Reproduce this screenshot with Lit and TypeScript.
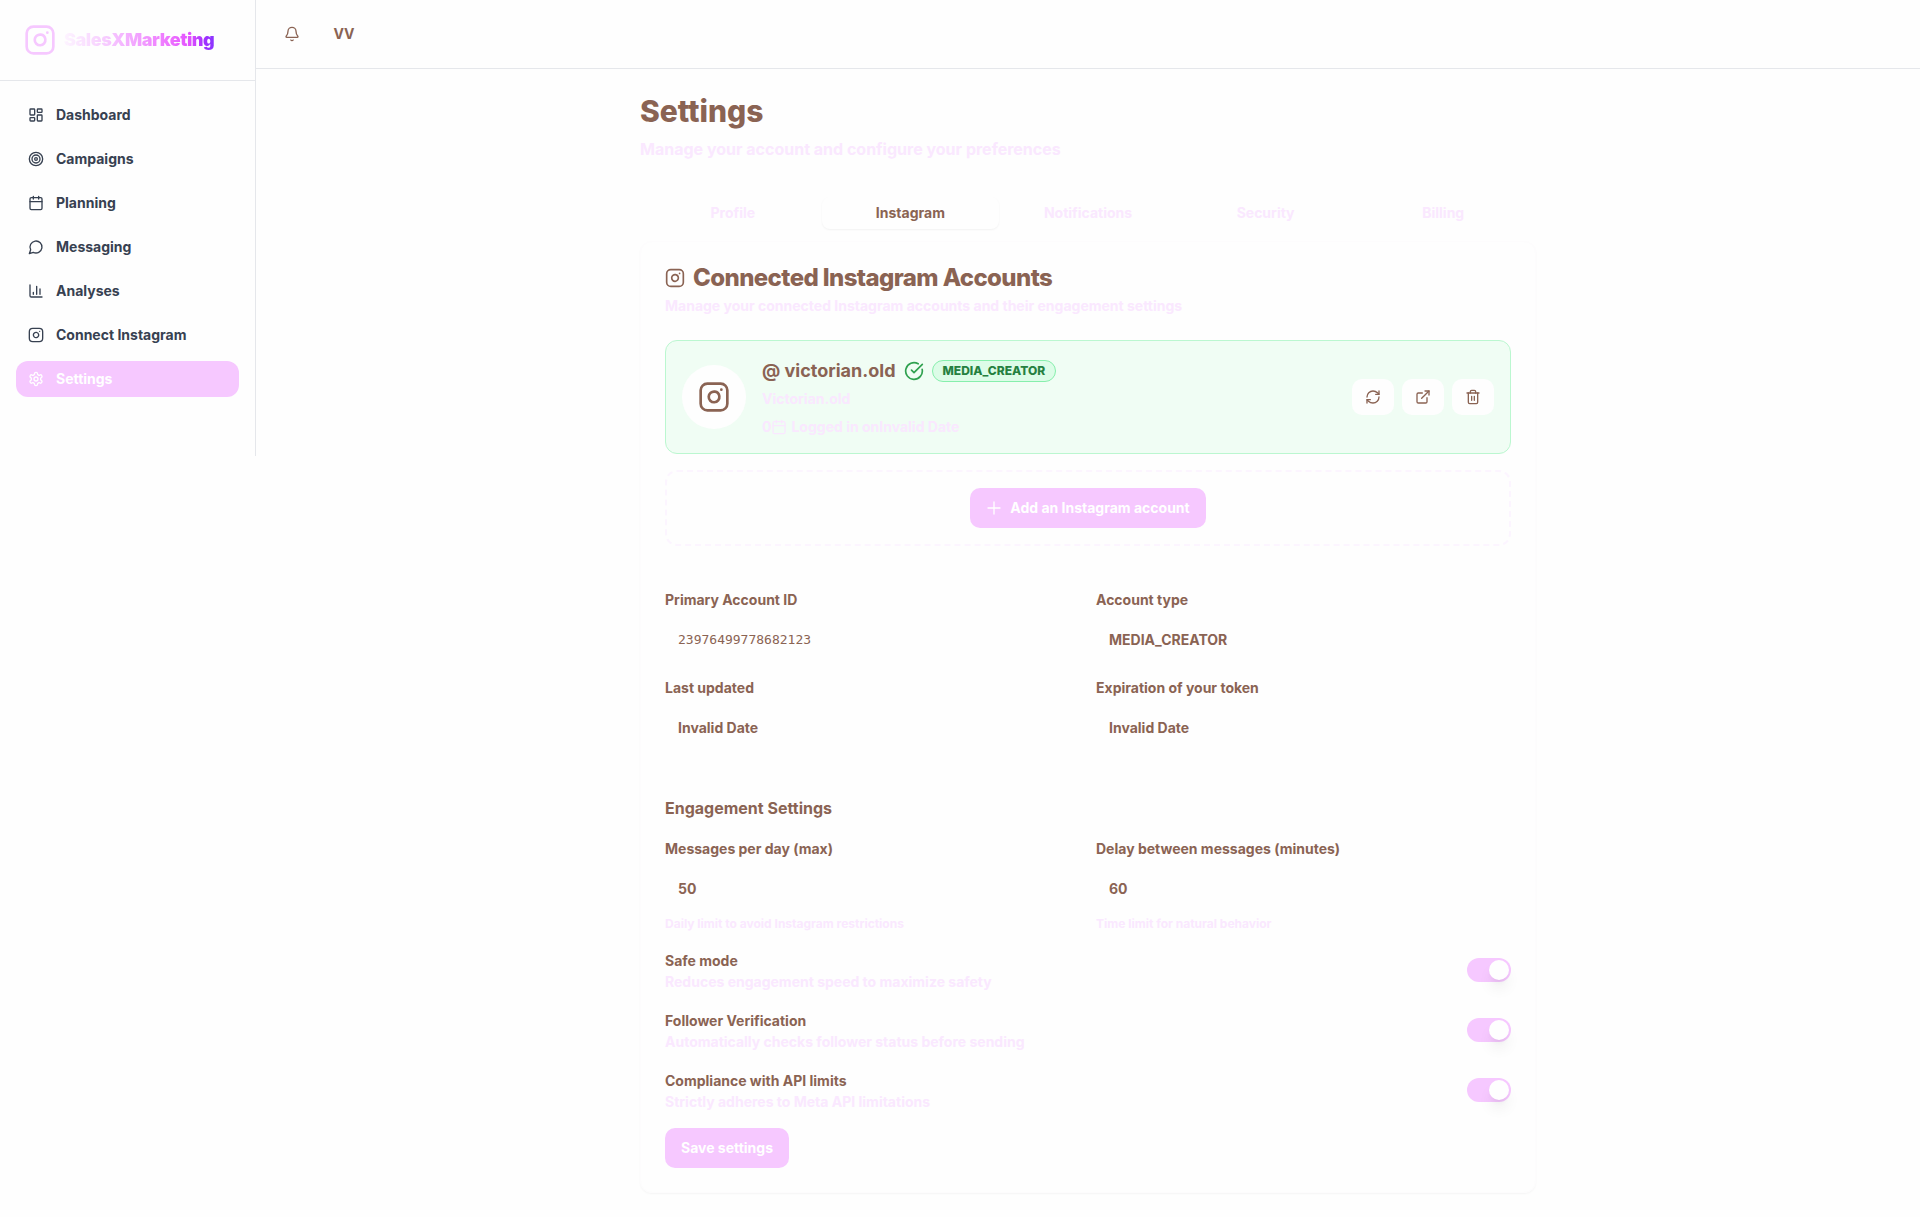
import { LitElement, html, css, svg, nothing, type TemplateResult } from "lit";
import { customElement, property, state } from "lit/decorators.js";
import { classMap } from "lit/directives/class-map.js";

const glyphs: Record<string, TemplateResult> = {
  instagram: svg`<rect width="20" height="20" x="2" y="2" rx="5"/><path d="M16 11.37A4 4 0 1 1 12.63 8 4 4 0 0 1 16 11.37z"/><path d="M17.5 6.5h.01"/>`,
  dashboard: svg`<rect width="7" height="9" x="3" y="3" rx="1"/><rect width="7" height="5" x="14" y="3" rx="1"/><rect width="7" height="9" x="14" y="12" rx="1"/><rect width="7" height="5" x="3" y="16" rx="1"/>`,
  target: svg`<circle cx="12" cy="12" r="10"/><circle cx="12" cy="12" r="6"/><circle cx="12" cy="12" r="2"/>`,
  calendar: svg`<path d="M8 2v4M16 2v4"/><rect width="18" height="18" x="3" y="4" rx="2"/><path d="M3 10h18"/>`,
  message: svg`<path d="M7.9 20A9 9 0 1 0 4 16.1L2 22Z"/>`,
  chart: svg`<path d="M3 3v16a2 2 0 0 0 2 2h16"/><path d="M18 17V9M13 17V5M8 17v-3"/>`,
  settings: svg`<path d="M12.22 2h-.44a2 2 0 0 0-2 2v.18a2 2 0 0 1-1 1.73l-.43.25a2 2 0 0 1-2 0l-.15-.08a2 2 0 0 0-2.73.73l-.22.38a2 2 0 0 0 .73 2.73l.15.1a2 2 0 0 1 1 1.72v.51a2 2 0 0 1-1 1.74l-.15.09a2 2 0 0 0-.73 2.73l.22.38a2 2 0 0 0 2.73.73l.15-.08a2 2 0 0 1 2 0l.43.25a2 2 0 0 1 1 1.73V20a2 2 0 0 0 2 2h.44a2 2 0 0 0 2-2v-.18a2 2 0 0 1 1-1.73l.43-.25a2 2 0 0 1 2 0l.15.08a2 2 0 0 0 2.73-.73l.22-.39a2 2 0 0 0-.73-2.73l-.15-.08a2 2 0 0 1-1-1.74v-.5a2 2 0 0 1 1-1.74l.15-.09a2 2 0 0 0 .73-2.73l-.22-.38a2 2 0 0 0-2.73-.73l-.15.08a2 2 0 0 1-2 0l-.43-.25a2 2 0 0 1-1-1.73V4a2 2 0 0 0-2-2z"/><circle cx="12" cy="12" r="3"/>`,
  bell: svg`<path d="M10.268 21a2 2 0 0 0 3.464 0"/><path d="M3.262 15.326A1 1 0 0 0 4 17h16a1 1 0 0 0 .74-1.673C19.41 13.956 18 12.499 18 8A6 6 0 0 0 6 8c0 4.499-1.411 5.956-2.738 7.326"/>`,
  check: svg`<path d="M21.801 10A10 10 0 1 1 17 3.335"/><path d="m9 11 3 3L22 4"/>`,
  refresh: svg`<path d="M3 12a9 9 0 0 1 9-9 9.75 9.75 0 0 1 6.74 2.74L21 8"/><path d="M21 3v5h-5"/><path d="M21 12a9 9 0 0 1-9 9 9.75 9.75 0 0 1-6.74-2.74L3 16"/><path d="M8 16H3v5"/>`,
  external: svg`<path d="M15 3h6v6"/><path d="M10 14 21 3"/><path d="M18 13v6a2 2 0 0 1-2 2H5a2 2 0 0 1-2-2V8a2 2 0 0 1 2-2h6"/>`,
  trash: svg`<path d="M3 6h18"/><path d="M19 6v14c0 1-1 2-2 2H7c-1 0-2-1-2-2V6"/><path d="M8 6V4c0-1 1-2 2-2h4c1 0 2 1 2 2v2"/><path d="M10 11v6M14 11v6"/>`,
  plus: svg`<path d="M3 12h18M12 3v18"/>`,
};

@customElement("ui-icon")
class UiIcon extends LitElement {
  @property() name = "";
  @property({ type: Number }) size = 16;
  static styles = css`
    :host { display: inline-flex; flex: none; }
    .glyph { display: block; fill: none; stroke: currentColor; stroke-width: 2; stroke-linecap: round; stroke-linejoin: round; }
  `;
  render() {
    return html`<svg class="glyph" width=${this.size} height=${this.size} viewBox="0 0 24 24" aria-hidden="true">${glyphs[this.name] ?? nothing}</svg>`;
  }
}

@customElement("app-sidebar")
class AppSidebar extends LitElement {
  static styles = css`
    :host { display: block; }
    .side { box-sizing: border-box; height: 100%; border-right: 1px solid #e5e7eb; }
    .brand { display: flex; align-items: center; gap: 8px; padding: 24px; border-bottom: 1px solid #e5e7eb; color: #f6c8ff; }
    .brand-name {
      font-size: 18px; line-height: 28px; font-weight: 900; letter-spacing: -0.025em;
      background: linear-gradient(90deg, #fdf4ff 0%, #fae0ff 15%, #f6c8ff 30%, #f2a0ff 50%, #ee74ff 70%, #e250ff 84%, #a030ff 94%, #8b36ff 100%);
      -webkit-background-clip: text; background-clip: text; color: transparent;
    }
    .nav { display: flex; flex-direction: column; gap: 8px; padding: 16px 16px 59px; }
    .item { display: flex; align-items: center; gap: 12px; padding: 8px 12px; border-radius: 12px; font-size: 14px; line-height: 20px; color: #374151; text-decoration: none; }
    .item.active { background: #f6c8ff; color: #ffffff; }
  `;
  private items = [
    ["dashboard", "Dashboard"],
    ["target", "Campaigns"],
    ["calendar", "Planning"],
    ["message", "Messaging"],
    ["chart", "Analyses"],
    ["instagram", "Connect Instagram"],
    ["settings", "Settings"],
  ];
  render() {
    return html`<aside class="side">
      <div class="brand"><ui-icon name="instagram" size="32"></ui-icon><span class="brand-name">SalesXMarketing</span></div>
      <nav class="nav">
        ${this.items.map(([icon, label]) => html`<a href="#" class=${classMap({ item: true, active: label === "Settings" })}><ui-icon name=${icon}></ui-icon>${label}</a>`)}
      </nav>
    </aside>`;
  }
}

@customElement("app-root")
class AppRoot extends LitElement {
  @state() private tab = "Instagram";
  static styles = css`
    :host { display: block; min-height: 100vh; background: #fefefe; color: #8a6353; font-family: Inter, "Liberation Sans", sans-serif; font-size: 14px; line-height: 20px; font-weight: 700; }
    button, input { font: inherit; color: inherit; margin: 0; }
    button { border: 0; background: none; padding: 0; cursor: pointer; }
    h1, h2, h3, p { margin: 0; }
    .shell { display: grid; grid-template-columns: 256px minmax(0, 1fr); align-items: start; }
    .topbar { display: flex; align-items: center; gap: 12px; padding: 14px 16px; border-bottom: 1px solid #e5e7eb; }
    .top-btn { display: flex; align-items: center; justify-content: center; width: 40px; height: 40px; }
    .page { max-width: 896px; margin: 0 auto; padding: 24px; }
    .title { font-size: 30px; line-height: 36px; font-weight: 800; }
    .subtitle { margin-top: 8px; font-size: 16px; line-height: 24px; color: #fae8ff; }
    .tabs { display: grid; grid-template-columns: repeat(5, minmax(0, 1fr)); margin-top: 32px; padding: 4px; }
    .tab { padding: 6px 12px; border-radius: 8px; color: #fae8ff; text-align: center; }
    .tab.active { background: #fefefe; color: #8a6353; box-shadow: 0 1px 2px rgba(0, 0, 0, 0.05); }
    .card { margin-top: 8px; padding: 24px; border: 1px solid #fdfcfd; border-radius: 12px; box-shadow: 0 1px 2px rgba(0, 0, 0, 0.04); }
    .card-title { display: flex; align-items: center; gap: 8px; font-size: 24px; line-height: 24px; font-weight: 800; letter-spacing: -0.025em; }
    .muted { color: #fae8ff; }
    .card-desc { margin-top: 6px; }
    .account { display: flex; align-items: center; gap: 16px; margin-top: 24px; padding: 16px; border: 1px solid #bbf7d0; border-radius: 12px; background: #f0fdf4; }
    .avatar { display: flex; align-items: center; justify-content: center; flex: none; width: 64px; height: 64px; border-radius: 50%; background: #fefefe; }
    .info { flex: 1; min-width: 0; }
    .name-row { display: flex; align-items: center; gap: 8px; }
    .name { font-size: 18px; line-height: 28px; font-weight: 700; }
    .ok { color: #2fa14f; }
    .badge { padding: 2px 10px; border: 1px solid #86efac; border-radius: 999px; background: #dcfce7; color: #25803f; font-size: 12px; line-height: 16px; font-weight: 800; }
    .full-name { margin-top: 4px; }
    .login { display: flex; align-items: center; margin-top: 8px; }
    .login-text { margin-left: 4px; }
    .actions { display: flex; gap: 8px; }
    .icon-btn { display: flex; padding: 10px 13px; border-radius: 10px; background: #fefefe; }
    .add-box { display: flex; justify-content: center; margin-top: 16px; padding: 16px; border: 2px dashed #fcf5ff; border-radius: 12px; }
    .primary { display: inline-flex; align-items: center; gap: 8px; padding: 10px 16px; border-radius: 10px; background: #f6c8ff; color: #ffffff; }
    .fields { display: grid; grid-template-columns: repeat(2, minmax(0, 1fr)); gap: 16px; }
    .details { margin-top: 41px; }
    .field { display: flex; flex-direction: column; gap: 6px; }
    .label { line-height: 26px; }
    .input { box-sizing: border-box; width: 100%; height: 40px; padding: 0 12px; border: 1px solid transparent; border-radius: 10px; background: transparent; outline: none; appearance: textfield; }
    .input.mono { font-family: "DejaVu Sans Mono", monospace; font-size: 13px; font-weight: 400; }
    .hint { margin-top: 2px; font-size: 12px; line-height: 16px; }
    .section { font-size: 16px; line-height: 24px; font-weight: 700; margin: 49px 0 16px; }
    .rows { display: flex; flex-direction: column; gap: 16px; margin: 16px 0; }
    .row { display: flex; align-items: center; justify-content: space-between; }
    .row-text { padding-bottom: 2px; }
    .row .label { display: block; }
    .row .muted { line-height: 16px; }
    .switch { appearance: none; display: flex; align-items: center; box-sizing: border-box; width: 44px; height: 24px; padding: 2px; border-radius: 12px; background: #e5e7eb; cursor: pointer; }
    .switch::before { content: ""; width: 20px; height: 20px; border-radius: 50%; background: #fefefe; box-shadow: 0 10px 15px -3px rgba(0, 0, 0, 0.1), 0 4px 6px -4px rgba(0, 0, 0, 0.1); }
    .switch:checked { justify-content: flex-end; background: #f6c8ff; }
  `;
  private field(id: string, label: string, value: string, hint = "", mono = false) {
    return html`<div class="field">
      <label class="label" for=${id}>${label}</label>
      <input class=${classMap({ input: true, mono })} id=${id} .value=${value} ?readonly=${!hint} />
      ${hint ? html`<p class="hint muted">${hint}</p>` : nothing}
    </div>`;
  }
  private toggle(id: string, label: string, text: string) {
    return html`<div class="row">
      <div class="row-text"><label class="label" for=${id}>${label}</label><p class="muted">${text}</p></div>
      <input class="switch" type="checkbox" role="switch" id=${id} checked />
    </div>`;
  }
  render() {
    return html`<div class="shell">
      <app-sidebar></app-sidebar>
      <div>
        <header class="topbar">
          <button class="top-btn" aria-label="Notifications"><ui-icon name="bell"></ui-icon></button>
          <button class="top-btn">VV</button>
        </header>
        <main class="page">
          <h1 class="title">Settings</h1>
          <p class="subtitle">Manage your account and configure your preferences</p>
          <div class="tabs" role="tablist">
            ${["Profile", "Instagram", "Notifications", "Security", "Billing"].map((t) => html`<button role="tab" aria-selected=${t === this.tab} class=${classMap({ tab: true, active: t === this.tab })} @click=${() => (this.tab = t)}>${t}</button>`)}
          </div>
          <section class="card">
            <h2 class="card-title"><ui-icon name="instagram" size="20"></ui-icon>Connected Instagram Accounts</h2>
            <p class="card-desc muted">Manage your connected Instagram accounts and their engagement settings</p>
            <div class="account">
              <div class="avatar"><ui-icon name="instagram" size="32"></ui-icon></div>
              <div class="info">
                <div class="name-row"><h3 class="name">@ victorian.old</h3><ui-icon class="ok" name="check" size="20"></ui-icon><span class="badge">MEDIA_CREATOR</span></div>
                <p class="full-name muted">Victorian.old</p>
                <div class="login muted"><span>0</span><ui-icon name="calendar"></ui-icon><span class="login-text">Logged in onInvalid Date</span></div>
              </div>
              <div class="actions">
                <button class="icon-btn" aria-label="Refresh"><ui-icon name="refresh"></ui-icon></button>
                <button class="icon-btn" aria-label="Open"><ui-icon name="external"></ui-icon></button>
                <button class="icon-btn" aria-label="Delete"><ui-icon name="trash"></ui-icon></button>
              </div>
            </div>
            <div class="add-box"><button class="primary"><ui-icon name="plus"></ui-icon>Add an Instagram account</button></div>
            <div class="fields details">
              ${this.field("account-id", "Primary Account ID", "23976499778682123", "", true)}
              ${this.field("account-type", "Account type", "MEDIA_CREATOR")}
              ${this.field("updated", "Last updated", "Invalid Date")}
              ${this.field("expires", "Expiration of your token", "Invalid Date")}
            </div>
            <h3 class="section">Engagement Settings</h3>
            <div class="fields">
              ${this.field("per-day", "Messages per day (max)", "50", "Daily limit to avoid Instagram restrictions")}
              ${this.field("delay", "Delay between messages (minutes)", "60", "Time limit for natural behavior")}
            </div>
            <div class="rows">
              ${this.toggle("safe", "Safe mode", "Reduces engagement speed to maximize safety")}
              ${this.toggle("verify", "Follower Verification", "Automatically checks follower status before sending")}
              ${this.toggle("limits", "Compliance with API limits", "Strictly adheres to Meta API limitations")}
            </div>
            <button class="primary">Save settings</button>
          </section>
        </main>
      </div>
    </div>`;
  }
}
